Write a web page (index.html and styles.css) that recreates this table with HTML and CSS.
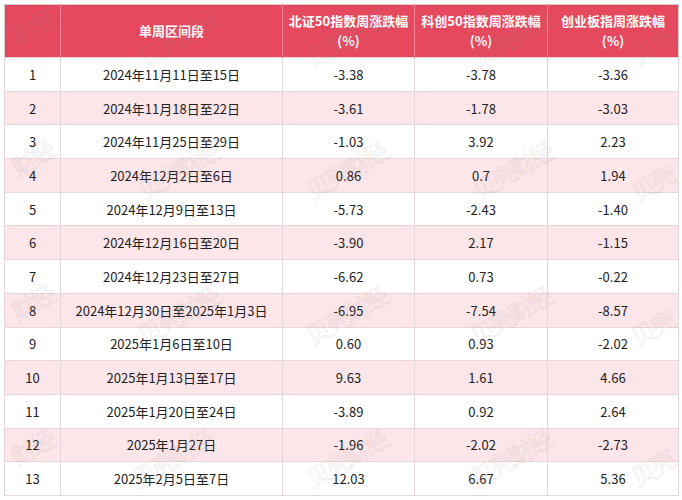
FILE: index.html
```html
<!DOCTYPE html>
<html lang="zh-CN">
<head>
<meta charset="utf-8">
<title>周涨跌幅</title>
<link rel="stylesheet" href="styles.css">
</head>
<body>
<div class="wrap">
<table class="data">
  <colgroup>
    <col class="c1"><col class="c2"><col class="c3"><col class="c4"><col class="c5">
  </colgroup>
  <thead>
    <tr>
      <th></th>
      <th>单周区间段</th>
      <th>北证50指数周涨跌幅<br>(%)</th>
      <th>科创50指数周涨跌幅<br>(%)</th>
      <th>创业板指周涨跌幅<br>(%)</th>
    </tr>
  </thead>
  <tbody>
    <tr><td>1</td><td>2024年11月11日至15日</td><td>-3.38</td><td>-3.78</td><td>-3.36</td></tr>
    <tr class="pink"><td>2</td><td>2024年11月18日至22日</td><td>-3.61</td><td>-1.78</td><td>-3.03</td></tr>
    <tr><td>3</td><td>2024年11月25日至29日</td><td>-1.03</td><td>3.92</td><td>2.23</td></tr>
    <tr class="pink"><td>4</td><td>2024年12月2日至6日</td><td>0.86</td><td>0.7</td><td>1.94</td></tr>
    <tr><td>5</td><td>2024年12月9日至13日</td><td>-5.73</td><td>-2.43</td><td>-1.40</td></tr>
    <tr class="pink"><td>6</td><td>2024年12月16日至20日</td><td>-3.90</td><td>2.17</td><td>-1.15</td></tr>
    <tr><td>7</td><td>2024年12月23日至27日</td><td>-6.62</td><td>0.73</td><td>-0.22</td></tr>
    <tr class="pink"><td>8</td><td>2024年12月30日至2025年1月3日</td><td>-6.95</td><td>-7.54</td><td>-8.57</td></tr>
    <tr><td>9</td><td>2025年1月6日至10日</td><td>0.60</td><td>0.93</td><td>-2.02</td></tr>
    <tr class="pink"><td>10</td><td>2025年1月13日至17日</td><td>9.63</td><td>1.61</td><td>4.66</td></tr>
    <tr><td>11</td><td>2025年1月20日至24日</td><td>-3.89</td><td>0.92</td><td>2.64</td></tr>
    <tr class="pink"><td>12</td><td>2025年1月27日</td><td>-1.96</td><td>-2.02</td><td>-2.73</td></tr>
    <tr><td>13</td><td>2025年2月5日至7日</td><td>12.03</td><td>6.67</td><td>5.36</td></tr>
  </tbody>
</table>
<div class="wm" aria-hidden="true">
  <span class="mark" style="left:32px;top:26px">财经</span>
  <span class="mark" style="left:178px;top:37px">贝壳财经</span>
  <span class="mark" style="left:346px;top:37px">贝壳财经</span>
  <span class="mark" style="left:512px;top:38px">贝壳财经</span>
  <span class="mark" style="left:652px;top:46px">贝壳</span>

  <span class="mark" style="left:32px;top:157px">财经</span>
  <span class="mark" style="left:178px;top:170px">贝壳财经</span>
  <span class="mark" style="left:346px;top:170px">贝壳财经</span>
  <span class="mark" style="left:512px;top:170px">贝壳财经</span>
  <span class="mark" style="left:652px;top:183px">贝壳</span>

  <span class="mark" style="left:32px;top:302px">财经</span>
  <span class="mark" style="left:178px;top:315px">贝壳财经</span>
  <span class="mark" style="left:346px;top:315px">贝壳财经</span>
  <span class="mark" style="left:510px;top:315px">贝壳财经</span>
  <span class="mark" style="left:652px;top:328px">贝壳</span>

  <span class="mark" style="left:32px;top:447px">财经</span>
  <span class="mark" style="left:172px;top:458px">贝壳财经</span>
  <span class="mark" style="left:346px;top:458px">贝壳财经</span>
  <span class="mark" style="left:510px;top:458px">贝壳财经</span>
  <span class="mark" style="left:652px;top:468px">贝壳</span>
</div>
</div>
</body>
</html>
```
FILE: styles.css
```css
html, body {
  margin: 0;
  padding: 0;
  background: #ffffff;
}
body {
  font-family: "Noto Sans CJK SC", "Noto Sans", sans-serif;
  color: #222;
}
.wrap {
  position: relative;
  width: 682px;
  height: 500px;
  overflow: hidden;
  padding: 4px 0 0 4px;
  box-sizing: border-box;
}
.data {
  border-collapse: collapse;
  table-layout: fixed;
  width: 674px;
  border: 1px solid #d6c8cb;
}
.c1 { width: 56px; }
.c2 { width: 222px; }
.c3 { width: 132px; }
.c4 { width: 133px; }
.c5 { width: 131px; }
.data th {
  background: #e6495e;
  color: #ffffff;
  font-weight: bold;
  font-size: 13px;
  line-height: 20px;
  height: 53px;
  padding: 0;
  text-align: center;
  vertical-align: middle;
  border-left: 1px solid #ee8594;
  box-sizing: border-box;
}
.data th:first-child { border-left: none; }
.data td {
  font-size: 13px;
  height: 33.7px;
  padding: 0;
  text-align: center;
  vertical-align: middle;
  border: 1px solid #e4d6d9;
  box-sizing: border-box;
}
.data tr.pink td {
  background: #fde6e9;
}
.wm {
  position: absolute;
  inset: 0;
  pointer-events: none;
}
.mark {
  position: absolute;
  font-size: 24px;
  line-height: 1;
  white-space: nowrap;
  color: rgba(255, 255, 255, 0.04);
  -webkit-text-stroke: 0.6px rgba(120, 120, 120, 0.2);
  transform: translate(-50%, -50%) rotate(-30deg);
  letter-spacing: -2px;
}
```
